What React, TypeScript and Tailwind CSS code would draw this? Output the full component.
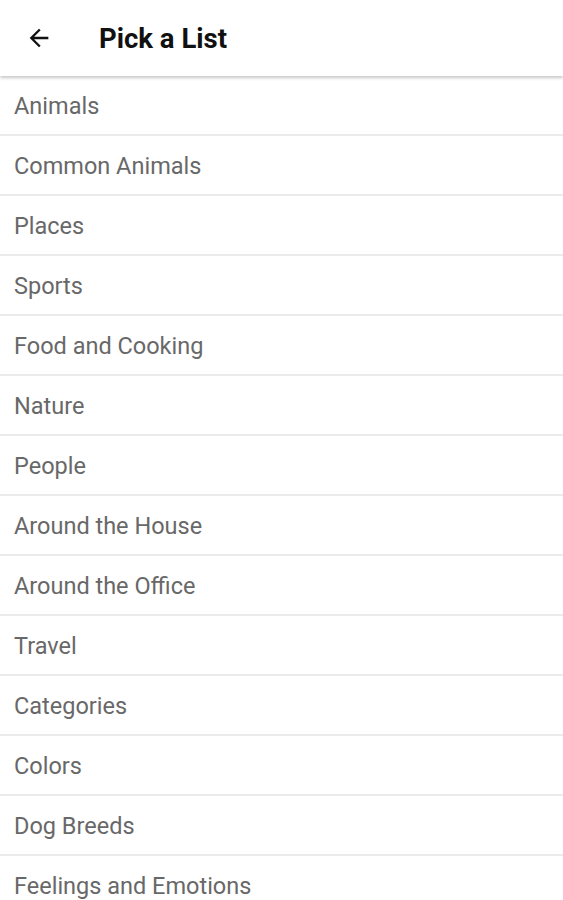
const lists = [
  "Animals",
  "Common Animals",
  "Places",
  "Sports",
  "Food and Cooking",
  "Nature",
  "People",
  "Around the House",
  "Around the Office",
  "Travel",
  "Categories",
  "Colors",
  "Dog Breeds",
  "Feelings and Emotions",
]

export default function App() {
  return (
    <div className="h-[900px] overflow-hidden bg-white" style={{ fontFamily: "Roboto, 'Noto Sans', sans-serif" }}>
      {/* App bar */}
      <div className="relative z-10 flex h-[76px] items-center bg-white shadow-[0_2px_3px_rgba(0,0,0,0.22)]">
        <div className="flex w-[77px] items-center justify-center">
          <svg width="28" height="28" viewBox="0 0 24 24" className="text-[#111]">
            <path d="M20 11H7.83l5.59-5.59L12 4l-8 8 8 8 1.41-1.41L7.83 13H20v-2z" fill="currentColor" />
          </svg>
        </div>
        <h1 className="ml-[22px] pt-[2px] text-[27.5px] font-bold text-[#111]">Pick a List</h1>
      </div>

      {/* List */}
      <ul>
        {lists.map((name) => (
          <li key={name} className="flex h-[60px] items-center border-b-2 border-[#ebebeb] px-[14px] pt-[3px] text-[23.5px] text-[#686868]">
            {name}
          </li>
        ))}
      </ul>
    </div>
  )
}
